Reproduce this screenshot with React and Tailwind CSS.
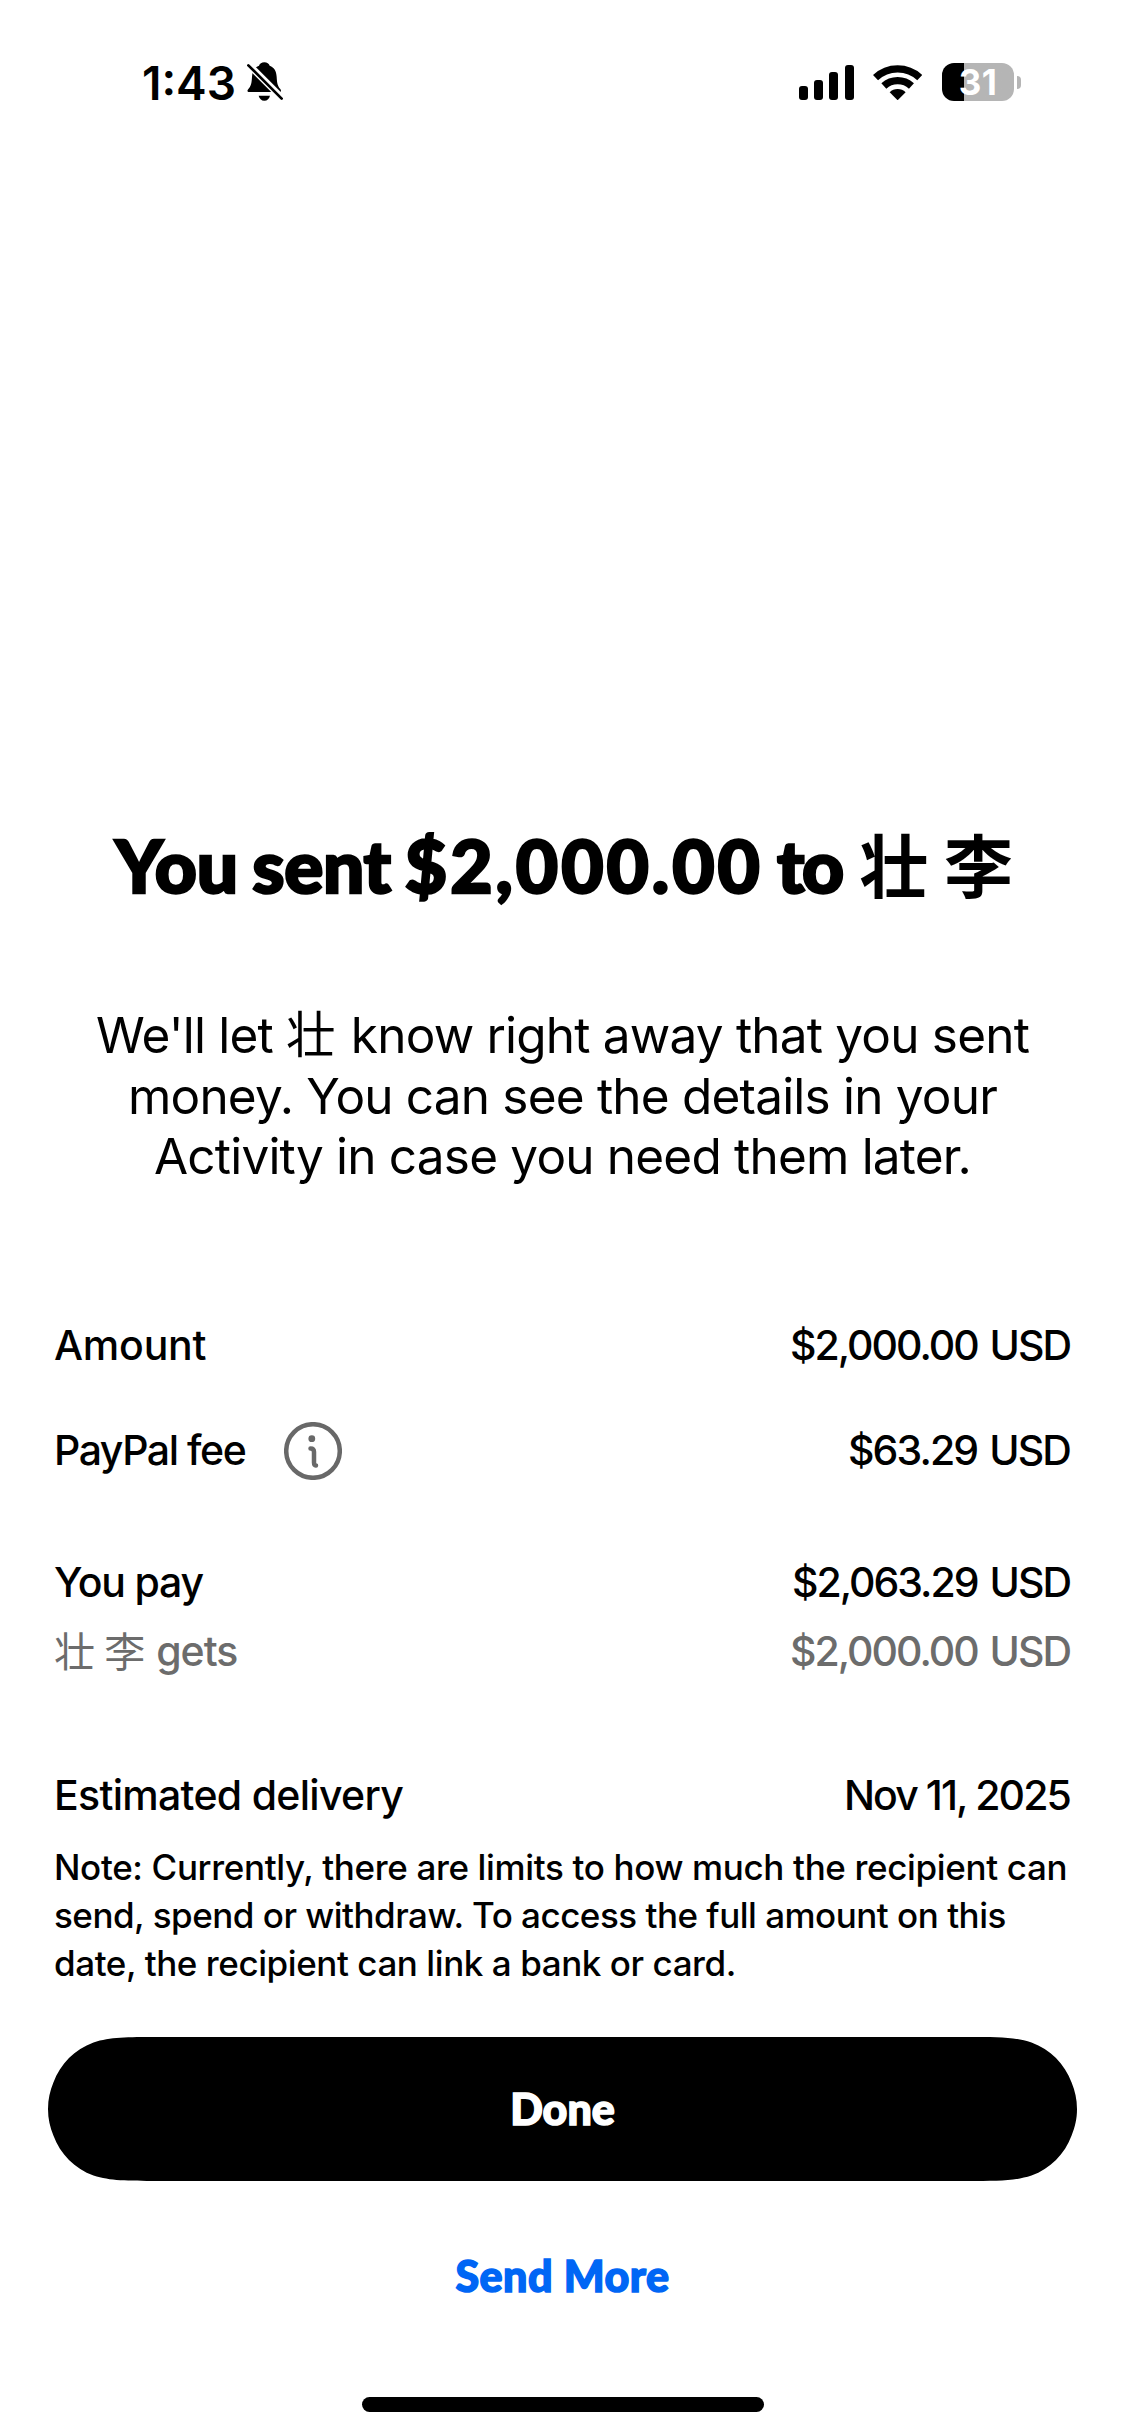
import clsx from "clsx";

const signalBars = ["h-[14px]", "h-[20px]", "h-[28px]", "h-[35px]"];

function BellOffIcon() {
  return (
    <svg viewBox="0 0 108 118" className="ml-[11px] h-[39.3px] w-[36px]">
      <path
        d="M52 1c-8 0-14 4-16 10C22 16 16 28 15 44c-1 20-3 28-11 37-4 4-4 9 3 9h91c5 0 5-5 2-9-8-9-10-17-11-37C88 28 82 16 68 11 66 5 60 1 52 1Z"
        fill="black"
      />
      <path d="M35 101h34c-2 9-8 15-17 15s-15-6-17-15Z" fill="black" />
      <path d="M2 5 110 113" stroke="white" strokeWidth="20" />
      <path
        d="M4 10 104 110"
        stroke="black"
        strokeWidth="8"
        strokeLinecap="round"
      />
    </svg>
  );
}

function WifiIcon() {
  return (
    <svg viewBox="0 0 148 110" className="h-[36.6px] w-[49.3px]">
      <g fill="none" stroke="black" strokeWidth="22">
        <path d="M7.5 41A97 97 0 0 1 140.500 41" />
        <path d="M32.500 66A61 61 0 0 1 115.500 66" />
      </g>
      <path d="M74 109 50 85A34 34 0 0 1 98 85Z" fill="black" />
    </svg>
  );
}

function Battery() {
  return (
    <div className="flex items-center">
      <div className="flex h-[38px] w-[72px] items-center justify-center rounded-[12px] bg-linear-to-r from-black from-[22px] to-[#b5b5b5] to-[22px]">
        <span className="font-['Inter'] text-[35px] leading-[38px] font-bold tracking-[0.5px] text-white">
          31
        </span>
      </div>
      <div className="ml-[3px] h-[13px] w-[4px] rounded-r-full bg-[#b5b5b5]" />
    </div>
  );
}

function StatusBar() {
  return (
    <div className="mt-[42px] flex h-[80px] items-center pr-[104px] pl-[142px]">
      <span className="pt-[2px] text-[46px] leading-none font-semibold">
        1:43
      </span>
      <BellOffIcon />

      <div className="ml-auto flex items-center">
        <div className="mr-[19px] flex items-end gap-[6.300px]">
          {signalBars.map((height) => (
            <span
              key={height}
              className={clsx("w-[9px] rounded-[3px] bg-black", height)}
            />
          ))}
        </div>
        <WifiIcon />
        <div className="ml-[20px]">
          <Battery />
        </div>
      </div>
    </div>
  );
}

function InfoIcon() {
  return (
    <svg
      viewBox="0 0 58 58"
      className="relative top-px ml-[39px] h-[58px] w-[58px]"
      fill="none"
      stroke="#686868"
      strokeWidth="4.5"
    >
      <circle cx="29" cy="29" r="26.800" />
      <circle cx="27.8" cy="16.7" r="3.4" fill="#686868" stroke="none" />
      <path
        d="M26.500 26.500c2.600 0 3.500 1.200 3.500 3.500v10.500c0 2 .5 2.800 2 3"
        strokeLinecap="round"
      />
    </svg>
  );
}

function Row({ label, value, muted, className, labelClass, valueClass }) {
  return (
    <div
      className={clsx(
        "flex h-[60px] items-center justify-between pr-[55px] pl-[54px] text-[41px] leading-[60px] font-medium whitespace-nowrap",
        muted && "text-[#6c6c6c]",
        className,
      )}
    >
      <span className={clsx("flex items-center", labelClass)}>{label}</span>
      <span className={valueClass}>{value}</span>
    </div>
  );
}

export default function App() {
  return (
    <main className="flex h-[2436px] w-[1125px] flex-col overflow-hidden bg-white font-['Inter','Noto_Sans_CJK_SC',sans-serif] text-black">
      <StatusBar />

      <h1 className="mt-[703px] flex h-[80px] items-baseline pl-[115px] font-['Lato','Noto_Sans_CJK_SC',sans-serif] text-[73px] leading-[80px] font-black whitespace-nowrap [-webkit-text-stroke:2.5px_black]">
        <span>You</span>
        <span className="ml-[14px] tracking-[-0.3px]">sent</span>
        <span className="ml-[14px] tracking-[3px]">$2,000.00</span>
        <span className="ml-[14px] tracking-[-2px]">to</span>
        <span className="ml-[17px] font-['Noto_Sans_CJK_SC'] text-[69px] leading-none font-bold [-webkit-text-stroke:0]">
          壮 李
        </span>
      </h1>

      <p className="mt-[100px] text-center text-[49.500px] leading-[60.500px] tracking-[-0.8px] whitespace-nowrap">
        We'll let{" "}
        <span className="mr-[3px] font-['Noto_Sans_CJK_SC'] leading-none">
          壮
        </span>{" "}
        know right away that you sent
        <br />
        money. You can see the details in your
        <br />
        Activity in case you need them later.
      </p>

      <Row
        className="mt-[128.500px]"
        label="Amount"
        value="$2,000.00 USD"
        labelClass="tracking-[-0.2px]"
        valueClass="tracking-[-2px] [word-spacing:3px]"
      />
      <Row
        className="mt-[45px]"
        label={
          <>
            PayPal fee
            <InfoIcon />
          </>
        }
        value="$63.29 USD"
        labelClass="tracking-[-1.450px]"
        valueClass="tracking-[-1.900px] [word-spacing:3px]"
      />
      <Row
        className="mt-[72px]"
        label="You pay"
        value="$2,063.29 USD"
        labelClass="tracking-[-1.200px]"
        valueClass="tracking-[-2px] [word-spacing:3px]"
      />
      <Row
        className="mt-[9px]"
        muted
        label={
          <>
            <span className="relative -top-[2px] mr-[11px] font-['Noto_Sans_CJK_SC'] font-normal tracking-normal">
              壮 李
            </span>
            gets
          </>
        }
        value="$2,000.00 USD"
        labelClass="tracking-[-1px]"
        valueClass="tracking-[-2px] [word-spacing:3px]"
      />
      <Row
        className="mt-[84px]"
        label="Estimated delivery"
        value="Nov 11, 2025"
        labelClass="tracking-[-0.700px]"
        valueClass="tracking-[-1.900px]"
      />

      <p className="mt-[18px] pl-[54px] text-[35px] leading-[48px] font-medium tracking-[-0.430px] whitespace-nowrap">
        <span className="tracking-[-0.350px]">
          Note: Currently, there are limits to how much the recipient can
        </span>
        <br />
        <span className="tracking-[-0.500px]">
          send, spend or withdraw. To access the full amount on this
        </span>
        <br />
        date, the recipient can link a bank or card.
      </p>

      {/* continuous corners, softer than a plain pill */}
      <button className="mt-[50px] ml-[48px] h-[144px] w-[1029px] shrink-0 bg-black font-['Lato'] text-[43px] font-black text-white [-webkit-text-stroke:1.5px_white] [clip-path:path('M110_0C78.4_0_62.5_0_45.5_5.4C26.8_12.2_12.2_26.8_5.4_45.5C2_54_0_62_0_72C0_82_2_90_5.4_98.5C12.2_117.2_26.8_131.8_45.5_138.6C62.5_144_78.4_144_110_144H919C950.6_144_966.5_144_983.5_138.6C1002.2_131.8_1016.8_117.2_1023.6_98.5C1027_90_1029_82_1029_72C1029_62_1027_54_1023.6_45.5C1016.8_26.8_1002.2_12.2_983.5_5.4C966.5_0_950.6_0_919_0Z')]">
        Done
      </button>
      <button className="mt-[65px] h-[60px] shrink-0 font-['Lato'] text-[43px] leading-[60px] font-black tracking-[0.5px] text-[#0066f5] [-webkit-text-stroke:1.5px_#0066f5]">
        Send More
      </button>

      <div className="mt-[91px] h-[15px] w-[402px] shrink-0 self-center rounded-full bg-black" />
    </main>
  );
}
